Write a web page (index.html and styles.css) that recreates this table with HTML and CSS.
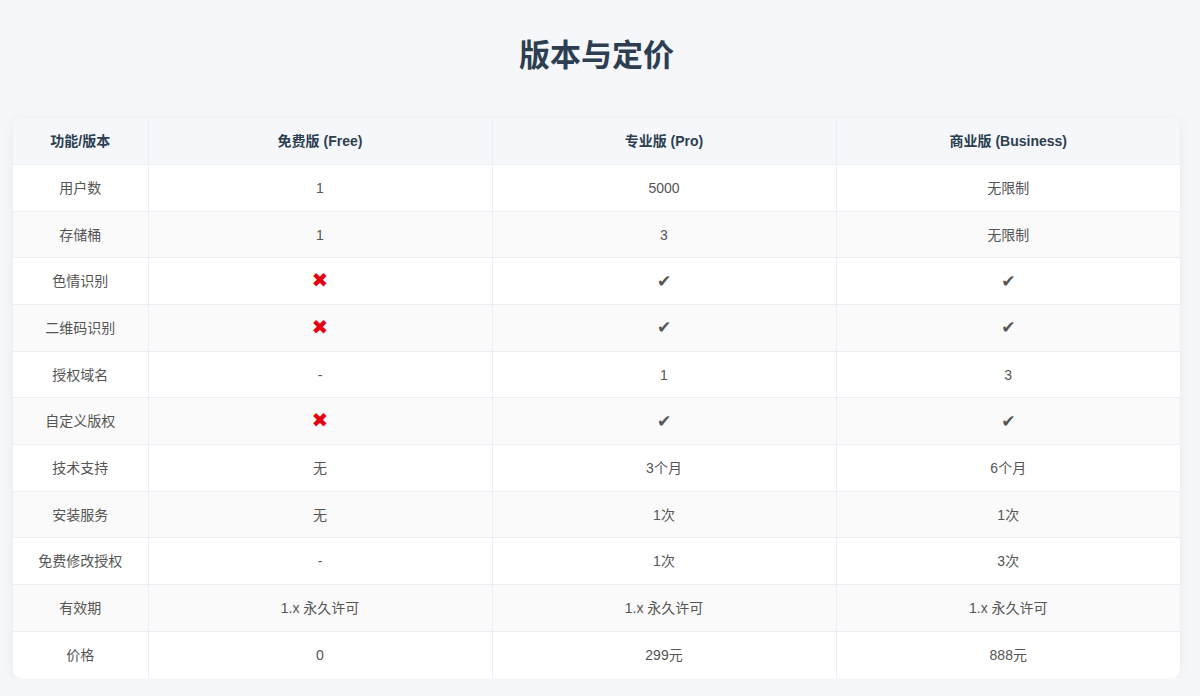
FILE: index.html
```html
<!DOCTYPE html>
<html lang="zh">
<head>
<meta charset="utf-8">
<title>版本与定价</title>
<link rel="stylesheet" href="styles.css">
</head>
<body>
<div class="page">
  <h1 class="title">版本与定价</h1>
  <div class="card">
    <table class="pricing">
      <thead>
        <tr><th class="c1">功能/版本</th><th>免费版 (Free)</th><th>专业版 (Pro)</th><th>商业版 (Business)</th></tr>
      </thead>
      <tbody>
        <tr><td>用户数</td><td>1</td><td>5000</td><td>无限制</td></tr>
        <tr><td>存储桶</td><td>1</td><td>3</td><td>无限制</td></tr>
        <tr><td>色情识别</td><td><span class="no">✖</span></td><td><span class="yes">✔</span></td><td><span class="yes">✔</span></td></tr>
        <tr><td>二维码识别</td><td><span class="no">✖</span></td><td><span class="yes">✔</span></td><td><span class="yes">✔</span></td></tr>
        <tr><td>授权域名</td><td>-</td><td>1</td><td>3</td></tr>
        <tr><td>自定义版权</td><td><span class="no">✖</span></td><td><span class="yes">✔</span></td><td><span class="yes">✔</span></td></tr>
        <tr><td>技术支持</td><td>无</td><td>3个月</td><td>6个月</td></tr>
        <tr><td>安装服务</td><td>无</td><td>1次</td><td>1次</td></tr>
        <tr><td>免费修改授权</td><td>-</td><td>1次</td><td>3次</td></tr>
        <tr><td>有效期</td><td>1.x 永久许可</td><td>1.x 永久许可</td><td>1.x 永久许可</td></tr>
        <tr><td>价格</td><td>0</td><td>299元</td><td>888元</td></tr>
      </tbody>
    </table>
  </div>
</div>
</body>
</html>
```
FILE: styles.css
```css
html, body {
  margin: 0;
  padding: 0;
  background: #f5f7fa;
  font-family: "Helvetica Neue", "Liberation Sans", Arial, "Noto Sans CJK SC", sans-serif;
}
.page {
  padding: 35px 20px 0 13px;
}
.title {
  margin: 0 0 41px;
  text-align: center;
  font-size: 31px;
  line-height: 42px;
  font-weight: 700;
  color: #2c3e50;
}
.card {
  background: #fff;
  border-radius: 8px;
  box-shadow: 0 2px 12px rgba(0, 0, 0, 0.06);
  overflow: hidden;
}
.pricing {
  width: 100%;
  border-collapse: collapse;
  table-layout: fixed;
}
.pricing th, .pricing td {
  height: 46.67px;
  padding: 0 10px;
  box-sizing: border-box;
  text-align: center;
  font-size: 14px;
  line-height: 20px;
  border-bottom: 1px solid #ebeef5;
  border-right: 1px solid #ebeef5;
}
.pricing th:last-child, .pricing td:last-child {
  border-right: none;
}
.pricing tbody tr:last-child td {
  border-bottom: none;
}
.pricing th {
  background: #f5f7fa;
  color: #2c3e50;
  font-weight: 700;
}
.pricing th.c1 {
  width: 135px;
}
.pricing td {
  color: #555;
}
.pricing tbody tr:nth-child(even) td {
  background: #fafafa;
}
.no {
  color: #e60012;
  font-size: 20px;
  font-family: "DejaVu Sans", sans-serif;
}
.yes {
  color: #555;
  font-size: 17px;
  font-family: "DejaVu Sans", sans-serif;
}
```
